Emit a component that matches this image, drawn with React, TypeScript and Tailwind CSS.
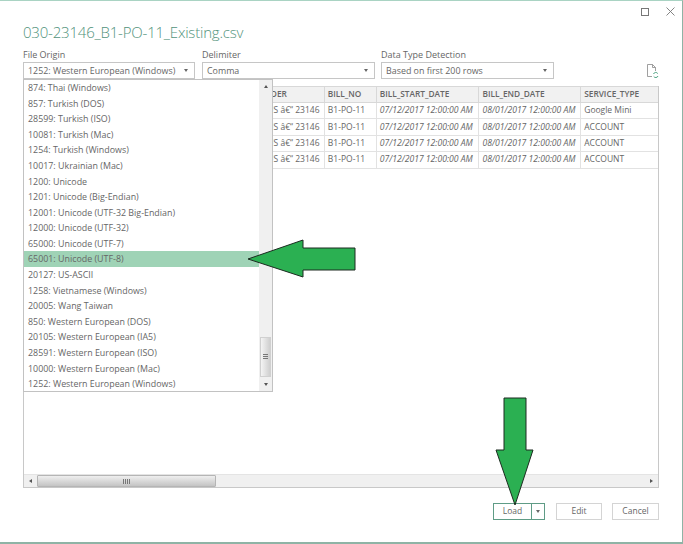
const ENCODINGS = [
  "874: Thai (Windows)",
  "857: Turkish (DOS)",
  "28599: Turkish (ISO)",
  "10081: Turkish (Mac)",
  "1254: Turkish (Windows)",
  "10017: Ukrainian (Mac)",
  "1200: Unicode",
  "1201: Unicode (Big-Endian)",
  "12001: Unicode (UTF-32 Big-Endian)",
  "12000: Unicode (UTF-32)",
  "65000: Unicode (UTF-7)",
  "65001: Unicode (UTF-8)",
  "20127: US-ASCII",
  "1258: Vietnamese (Windows)",
  "20005: Wang Taiwan",
  "850: Western European (DOS)",
  "20105: Western European (IA5)",
  "28591: Western European (ISO)",
  "10000: Western European (Mac)",
  "1252: Western European (Windows)",
];

const ROWS = [
  { type: "Google Mini" },
  { type: "ACCOUNT" },
  { type: "ACCOUNT" },
  { type: "ACCOUNT" },
];

function Caret() {
  return <span className="w-0 h-0 border-x-[2.5px] border-x-transparent border-t-[3px] border-t-[#666]" />;
}

function Select({ label, value, width, gap }: { label: string; value: string; width: string; gap?: string }) {
  return (
    <div className={`flex flex-col ${width} ${gap ?? ""}`}>
      <span className="text-[9px] leading-[13px] h-[14px] text-[#666]">{label}</span>
      <div className="h-[17px] border border-[#c6c6c6] bg-white flex items-center justify-between pl-[4px] pr-[6px]">
        <span className="text-[8.9px] text-[#666] whitespace-nowrap">{value}</span>
        <Caret />
      </div>
    </div>
  );
}

function HeaderCell({ children, className }: { children: string; className: string }) {
  return (
    <div className={`${className} border-r border-[#d8d8d8] flex items-center text-[8.3px] font-semibold text-[#666] whitespace-nowrap overflow-hidden`}>
      {children}
    </div>
  );
}

function Cell({ children, className }: { children: string; className: string }) {
  return (
    <div className={`${className} border-r border-[#e2e2e2] flex items-center text-[8.5px] text-[#666] whitespace-nowrap overflow-hidden`}>
      {children}
    </div>
  );
}

export default function App() {
  return (
    <div
      className="relative w-[683px] h-[544px] bg-white border-t border-t-[#a9d3c3] border-r border-r-[#8fb3a5] border-b-2 border-b-[#8fb3a5] overflow-hidden flex flex-col"
      style={{ fontFamily: '"Open Sans", "Noto Sans", sans-serif' }}
    >
      {/* Window buttons */}
      <div className="flex justify-end items-center gap-[17px] h-[15px] pr-[7px] pt-[6px]">
        <span className="w-[8px] h-[8px] border border-[#777]" />
        <svg width="9" height="9" viewBox="0 0 9 9" className="text-[#777]">
          <path d="M0.5 0.5 L8.5 8.5 M8.5 0.5 L0.5 8.5" stroke="currentColor" strokeWidth="0.9" fill="none" />
        </svg>
      </div>

      <div className="pl-[23px] pr-[23px] mt-[5px] flex-1 flex flex-col">
        <h1 className="text-[15px] leading-[22px] font-light tracking-[-0.2px] text-[#52937c] whitespace-nowrap">030-23146_B1-PO-11_Existing.csv</h1>

        {/* Import options */}
        <div className="flex mt-[5px] h-[31px] relative">
          <Select label="File Origin" value="1252: Western European (Windows)" width="w-[172px]" />
          <Select label="Delimiter" value="Comma" width="w-[173px]" gap="ml-[7px]" />
          <Select label="Data Type Detection" value="Based on first 200 rows" width="w-[173px]" gap="ml-[6px]" />
          <svg width="13" height="14" viewBox="0 0 13 14" className="ml-[92px] mt-[16px]" fill="none">
            <path d="M1.5 0.5 H6.5 L9.5 3.5 V7 M6.5 0.5 V3.5 H9.5 M1.5 0.5 V12.5 H6" stroke="#888" strokeWidth="0.8" />
            <path d="M7.5 10 A2.4 2.4 0 0 1 11.8 9.6 M12 12 A2.4 2.4 0 0 1 7.7 12.4" stroke="#3d9a75" strokeWidth="0.9" />
          </svg>
        </div>

        {/* Preview table */}
        <div className="mt-[7px] w-[636px] h-[402px] border border-[#c8c8c8] border-t-0 flex flex-col">
          <div className="flex h-[17px] bg-[#f1f1f1] border-y border-[#d8d8d8]">
            <HeaderCell className="w-[301px] pl-[235px]">ORDER</HeaderCell>
            <HeaderCell className="w-[52px] pl-[3px]">BILL_NO</HeaderCell>
            <HeaderCell className="w-[103px] pl-[3px]">BILL_START_DATE</HeaderCell>
            <HeaderCell className="w-[102px] pl-[3px]">BILL_END_DATE</HeaderCell>
            <HeaderCell className="w-[77px] pl-[3px] border-r-0">SERVICE_TYPE</HeaderCell>
          </div>
          {ROWS.map((row, i) => (
            <div key={i} className="flex h-[16.4px] border-b border-[#e2e2e2]">
              <Cell className="w-[301px] pl-[238px]">AUS â€“ 23146</Cell>
              <Cell className="w-[52px] pl-[3px]">B1-PO-11</Cell>
              <Cell className="w-[103px] pl-[3px] italic text-[8.6px]">07/12/2017 12:00:00 AM</Cell>
              <Cell className="w-[102px] pl-[3px] italic text-[8.6px]">08/01/2017 12:00:00 AM</Cell>
              <Cell className="w-[77px] pl-[3px] border-r-0">{row.type}</Cell>
            </div>
          ))}
          <div className="flex-1" />
          {/* Horizontal scrollbar */}
          <div className="h-[13px] bg-[#f0f0f0] flex items-center border-t border-[#e4e4e4]">
            <div className="w-[13px] flex justify-center">
              <span className="w-0 h-0 border-y-[2.5px] border-y-transparent border-r-[3px] border-r-[#555]" />
            </div>
            <div className="w-[179px] h-[12px] bg-gradient-to-b from-[#efefef] to-[#c4c4c4] border border-[#b5b5b5] rounded-[1px] flex items-center justify-center">
              <span className="w-[7px] h-[5px] bg-[repeating-linear-gradient(90deg,#777_0,#777_1px,transparent_1px,transparent_2px)]" />
            </div>
            <div className="flex-1" />
            <div className="w-[14px] flex justify-center">
              <span className="w-0 h-0 border-y-[2.5px] border-y-transparent border-l-[3px] border-l-[#555]" />
            </div>
          </div>
        </div>

        {/* Footer buttons */}
        <div className="flex justify-end mt-[15px] h-[17px]">
          <div className="flex h-[17px] w-[52px] border border-[#5f9c86] text-[8.5px] text-[#666]">
            <div className="w-[38px] flex items-center justify-center border-r border-[#5f9c86]">Load</div>
            <div className="flex-1 flex items-center justify-center"><Caret /></div>
          </div>
          <div className="ml-[11px] w-[46px] border border-[#d4d4d4] text-[8.5px] text-[#666] flex items-center justify-center">Edit</div>
          <div className="ml-[10px] w-[47px] border border-[#d4d4d4] text-[8.5px] text-[#666] flex items-center justify-center">Cancel</div>
        </div>
      </div>

      {/* Open File Origin dropdown */}
      <div className="absolute left-[23px] top-[78px] w-[250px] h-[313px] bg-white border border-[#c2c2c2] flex">
        <div className="flex-1">
          {ENCODINGS.map((name) => (
            <div
              key={name}
              className={`h-[15.58px] flex items-center pl-[4px] text-[8.9px] text-[#666] whitespace-nowrap ${name.startsWith("65001") ? "bg-[#9fd3b6]" : ""}`}
            >
              {name}
            </div>
          ))}
        </div>
        <div className="w-[13px] bg-[#f0f0f0] flex flex-col items-center justify-between py-[5px] relative">
          <span className="w-0 h-0 border-x-[2.5px] border-x-transparent border-b-[3px] border-b-[#555]" />
          <div className="absolute left-[1px] top-[257px] w-[11px] h-[40px] bg-gradient-to-r from-[#f4f4f4] to-[#cfcfcf] border border-[#d0d0d0] flex items-center justify-center">
            <span className="w-[5px] h-[6px] bg-[repeating-linear-gradient(180deg,#777_0,#777_1px,transparent_1px,transparent_2px)]" />
          </div>
          <span className="w-0 h-0 border-x-[2.5px] border-x-transparent border-t-[3px] border-t-[#555]" />
        </div>
      </div>

      {/* Annotation arrows */}
      <svg className="absolute left-[245px] top-[237px]" width="114" height="42" viewBox="245 237 114 42">
        <path d="M248 258 L303 239 V247 H355 V269 H303 V276 Z" fill="#2bb052" stroke="#1c2b20" strokeWidth="1" />
      </svg>
      <svg className="absolute left-[493px] top-[395px]" width="43" height="112" viewBox="493 395 43 112">
        <path d="M504 397 H526 V449 H533 L515 504 L496 449 H504 Z" fill="#2bb052" stroke="#1c2b20" strokeWidth="1" />
      </svg>
    </div>
  );
}
